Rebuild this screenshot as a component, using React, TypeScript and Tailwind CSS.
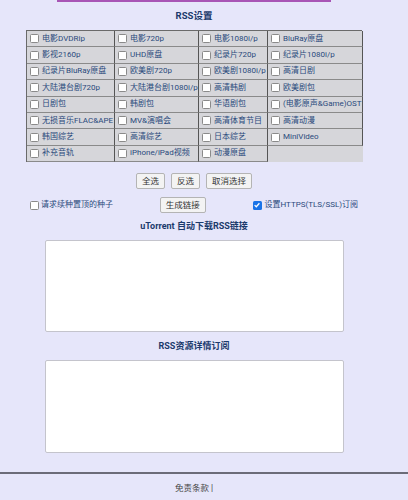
import React from 'react'

const rows: (string | null)[][] = [
  ['电影DVDRip', '电影720p', '电影1080i/p', 'BluRay原盘'],
  ['影视2160p', 'UHD原盘', '纪录片720p', '纪录片1080i/p'],
  ['纪录片BluRay原盘', '欧美剧720p', '欧美剧1080i/p', '高清日剧'],
  ['大陆港台剧720p', '大陆港台剧1080i/p', '高清韩剧', '欧美剧包'],
  ['日剧包', '韩剧包', '华语剧包', '(电影原声&Game)OST'],
  ['无损音乐FLAC&APE', 'MV&演唱会', '高清体育节目', '高清动漫'],
  ['韩国综艺', '高清综艺', '日本综艺', 'MiniVideo'],
  ['补充音轨', 'iPhone/iPad视频', '动漫原盘', null],
]

const font = { fontFamily: 'Roboto, "Noto Sans CJK SC", sans-serif' }

function Box({ checked = false }: { checked?: boolean }) {
  if (checked) {
    return (
      <span className="inline-flex h-[9px] w-[9px] shrink-0 items-center justify-center rounded-[1.5px] bg-[#1a73e8]">
        <svg viewBox="0 0 10 10" className="h-[8px] w-[8px]">
          <path d="M2 5.2 4.1 7.2 8 2.8" fill="none" stroke="white" strokeWidth="1.6" />
        </svg>
      </span>
    )
  }
  return <span className="inline-block h-[9px] w-[9px] shrink-0 rounded-[1.5px] border border-[#8a8a8a] bg-white" />
}

function Btn({ children }: { children: React.ReactNode }) {
  return (
    <button className="h-[16px] rounded-[2px] border border-[#b4b4b4] bg-[#f3f3f3] px-[5px] text-[8.5px] leading-none text-[#333]">
      {children}
    </button>
  )
}

export default function App() {
  return (
    <div className="min-h-[500px] bg-[#e6e6fa]" style={font}>
      <div className="w-[388px]">
        <div className="mx-auto h-[2px] w-[274px] border-b-2 border-[#a855b5] bg-[#c9c9dc]" />

        <h2 className="mt-[8px] text-center text-[9.5px] font-bold leading-[12px] text-[#1b3a6c]">RSS设置</h2>

        <div className="mx-auto mt-[8px] grid w-[336px] grid-cols-[88px_84px_69px_95px] border-l border-t border-[#6a6a6a]">
          {rows.flat().map((label, i) =>
            label === null ? (
              <div key={i} className="h-[16.4px] bg-[#d6d6da]" />
            ) : (
              <div
                key={i}
                className="flex h-[16.4px] items-center gap-[3px] overflow-hidden border-b border-r border-b-[#8a8a8a] border-r-[#555] bg-[#d6d6da] pl-[3px] text-[8px] whitespace-nowrap text-[#2a4a7c]"
              >
                <Box />
                <span>{label}</span>
              </div>
            ),
          )}
        </div>

        <div className="mt-[11px] flex justify-center gap-[6px]">
          <Btn>全选</Btn>
          <Btn>反选</Btn>
          <Btn>取消选择</Btn>
        </div>

        <div className="mx-auto mt-[8px] flex w-[328px] items-center justify-between">
          <label className="flex items-center gap-[2px] text-[8px] text-[#2a4a7c]">
            <Box />
            请求续种置顶的种子
          </label>
          <Btn>生成链接</Btn>
          <label className="flex items-center gap-[3px] text-[8px] text-[#2a4a7c]">
            <Box checked />
            设置HTTPS(TLS/SSL)订阅
          </label>
        </div>

        <h3 className="mt-[7px] text-center text-[9px] font-bold leading-[12px] text-[#1b3a6c]">
          uTorrent 自动下载RSS链接
        </h3>
        <textarea className="mx-auto mt-[8px] block h-[92px] w-[299px] resize-none rounded-[2px] border border-[#c4c4cc] bg-white" />

        <h3 className="mt-[8px] text-center text-[9px] font-bold leading-[12px] text-[#1b3a6c]">RSS资源详情订阅</h3>
        <textarea className="mx-auto mt-[8px] block h-[93px] w-[299px] resize-none rounded-[2px] border border-[#c4c4cc] bg-white" />
      </div>

      <div className="mt-[19px] border-t-2 border-[#6b6b78]" />
      <div className="w-[388px] pt-[8px] text-center text-[8.5px] text-[#444]">免责条款 |</div>
    </div>
  )
}
